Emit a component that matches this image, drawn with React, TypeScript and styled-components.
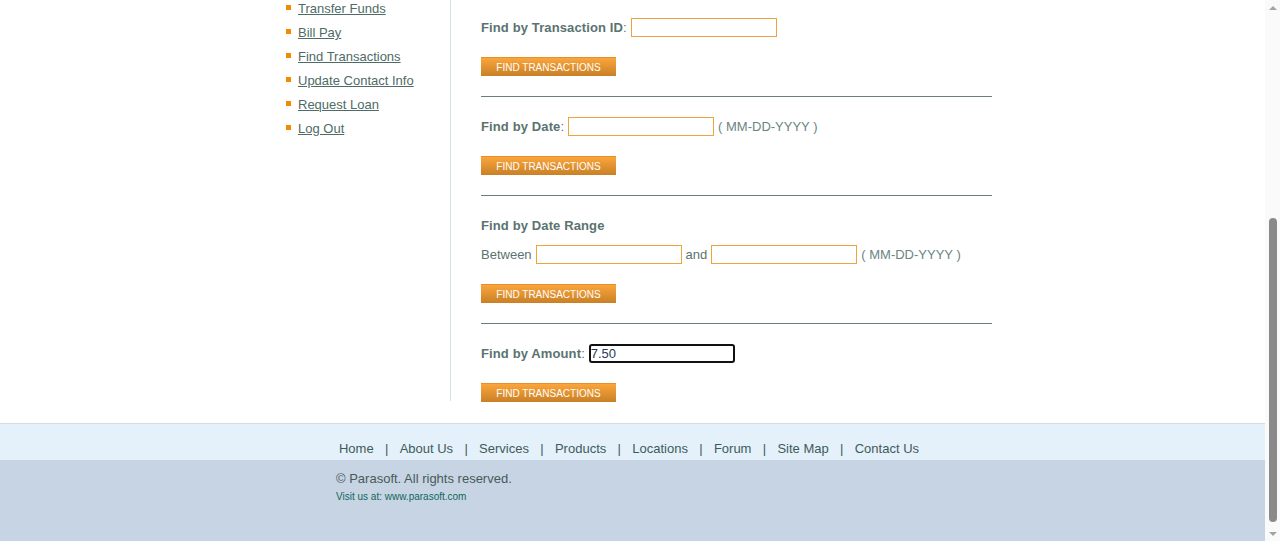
import React from 'react';
import styled, { createGlobalStyle } from 'styled-components';

const GlobalStyle = createGlobalStyle`
  body {
    margin: 0;
    background: #fff;
    font-family: 'Liberation Sans', Arial, sans-serif;
    font-size: 13px;
    color: #5a7370;
  }
`;

const Window = styled.div`
  display: flex;
  height: 541px;
  overflow: hidden;
`;

const Page = styled.div`
  flex: 1;
  min-width: 0;
  display: flex;
  flex-direction: column;
`;

const Container = styled.div`
  width: 719px;
  margin: 0 auto;
  display: flex;
`;

const LeftPanel = styled.div`
  width: 177px;
  flex: none;
  margin-bottom: 1px;
  border-right: 1px solid #cde8e3;
`;

const ServiceList = styled.ul`
  margin: 0;
  padding: 0;
  list-style: none;
`;

const ServiceItem = styled.li`
  display: flex;
  align-items: flex-start;
  height: 24px;
  padding-left: 13px;

  &::before {
    content: '';
    width: 5px;
    height: 5px;
    margin: 5px 7px 0 0;
    background: #f08c00;
    flex: none;
  }
`;

const ServiceLink = styled.a`
  color: #4f6b67;
  text-decoration: underline;
  line-height: 16px;
  padding-top: 1px;
`;

const RightPanel = styled.div`
  flex: 1;
  padding-left: 30px;
`;

const Section = styled.div<{ $first?: boolean; $last?: boolean }>`
  padding: ${(p) => (p.$first ? 18 : 20)}px 0 ${(p) => (p.$last ? 0 : 20)}px;
  border-bottom: ${(p) => (p.$last ? 'none' : '1px solid #687f7c')};
`;

const Heading = styled.div`
  font-weight: 700;
  letter-spacing: 0.12px;
  line-height: 19px;
  margin-bottom: 10px;
`;

const FormRow = styled.div`
  display: flex;
  align-items: center;
  gap: 4px;
  height: 19px;
  line-height: 19px;
  white-space: nowrap;
`;

const Label = styled.span`
  b {
    font-weight: 700;
    letter-spacing: 0.12px;
  }
`;

const Hint = styled.span`
  color: #6b8582;
`;

const TextInput = styled.input<{ $focused?: boolean }>`
  box-sizing: border-box;
  width: 146px;
  height: 19px;
  margin: 0;
  padding: 0 ${(p) => (p.$focused ? 0 : 1)}px;
  font-family: 'Liberation Sans', Arial, sans-serif;
  font-size: 13px;
  color: #243b55;
  background: #fff;
  outline: none;
  border: ${(p) => (p.$focused ? '2px solid #111' : '1px solid #f0a23e')};
  border-radius: ${(p) => (p.$focused ? 3 : 0)}px;
`;

const FindButton = styled.button`
  display: block;
  box-sizing: border-box;
  width: 135px;
  height: 19px;
  margin-top: 20px;
  padding: 0;
  border: none;
  border-top: 1px solid #e68f2c;
  background: linear-gradient(#fba53b, #c98027);
  color: #fff;
  font-family: 'Liberation Sans', Arial, sans-serif;
  font-size: 10px;
  line-height: 17px;
  text-transform: uppercase;
  cursor: pointer;
`;

const Footer = styled.div`
  margin-top: 21px;
  border-top: 1px solid #d3dce3;
  flex: 1;
  display: flex;
  flex-direction: column;
`;

const FooterLinks = styled.ul`
  margin: 0;
  padding: 17px 7px 3px 0;
  list-style: none;
  background: #e4f1fa;
  display: flex;
  justify-content: center;
  line-height: 16px;

  a {
    color: #3e5b5a;
    text-decoration: none;
  }
`;

const Sep = styled.span`
  color: #3e5b5a;
  padding: 0 11.3px;
`;

const FooterBottom = styled.div`
  flex: 1;
  background: #c6d4e3;
  padding-top: 11px;
`;

const FooterInner = styled.div`
  width: 593px;
  margin: 0 auto;
`;

const Copyright = styled.p`
  margin: 0;
  line-height: 16px;
  color: #485a5a;
`;

const Visit = styled.p`
  margin: 4px 0 0;
  font-size: 10px;
  line-height: 12px;
  color: #11675c;

  a {
    color: #11675c;
    text-decoration: none;
  }
`;

const ScrollTrack = styled.div`
  width: 15px;
  flex: none;
  background: #fafafa;
  display: flex;
  flex-direction: column;
  align-items: center;
`;

const Arrow = styled.div<{ $down?: boolean }>`
  height: 15px;
  width: 15px;
  display: flex;
  align-items: center;
  justify-content: center;

  &::before {
    content: '';
    border-left: 4.5px solid transparent;
    border-right: 4.5px solid transparent;
    ${(p) => (p.$down ? 'border-top' : 'border-bottom')}: 4.5px solid #a3a3a3;
  }
`;

const ThumbArea = styled.div`
  flex: 1;
  display: flex;
  flex-direction: column;
  justify-content: flex-end;
  padding-bottom: 4px;
`;

const Thumb = styled.div`
  width: 8px;
  border-radius: 4px;
  background: #8a8a8a;
`;

const services = [
  'Transfer Funds',
  'Bill Pay',
  'Find Transactions',
  'Update Contact Info',
  'Request Loan',
  'Log Out',
];

const footerLinks = [
  'Home',
  'About Us',
  'Services',
  'Products',
  'Locations',
  'Forum',
  'Site Map',
  'Contact Us',
];

// share of the page that fits in the window, sets the thumb length
const visibleShare = 0.6;

export default function App() {
  return (
    <>
      <GlobalStyle />
      <Window>
        <Page>
          <Container>
            <LeftPanel>
              <ServiceList>
                {services.map((s) => (
                  <ServiceItem key={s}>
                    <ServiceLink href="#">{s}</ServiceLink>
                  </ServiceItem>
                ))}
              </ServiceList>
            </LeftPanel>

            <RightPanel>
              <Section $first>
                <FormRow>
                  <Label><b>Find by Transaction ID</b>:</Label>
                  <TextInput />
                </FormRow>
                <FindButton>Find Transactions</FindButton>
              </Section>

              <Section>
                <FormRow>
                  <Label><b>Find by Date</b>:</Label>
                  <TextInput />
                  <Hint>( MM-DD-YYYY )</Hint>
                </FormRow>
                <FindButton>Find Transactions</FindButton>
              </Section>

              <Section>
                <Heading>Find by Date Range</Heading>
                <FormRow>
                  <Label>Between</Label>
                  <TextInput />
                  <Label>and</Label>
                  <TextInput />
                  <Hint>( MM-DD-YYYY )</Hint>
                </FormRow>
                <FindButton>Find Transactions</FindButton>
              </Section>

              <Section $last>
                <FormRow>
                  <Label><b>Find by Amount</b>:</Label>
                  <TextInput $focused defaultValue="7.50" />
                </FormRow>
                <FindButton>Find Transactions</FindButton>
              </Section>
            </RightPanel>
          </Container>

          <Footer>
            <FooterLinks>
              {footerLinks.map((l, i) => (
                <li key={l}>
                  <a href="#">{l}</a>
                  {i < footerLinks.length - 1 && <Sep>|</Sep>}
                </li>
              ))}
            </FooterLinks>
            <FooterBottom>
              <FooterInner>
                <Copyright>© Parasoft. All rights reserved.</Copyright>
                <Visit>
                  Visit us at: <a href="#">www.parasoft.com</a>
                </Visit>
              </FooterInner>
            </FooterBottom>
          </Footer>
        </Page>

        <ScrollTrack>
          <Arrow />
          <ThumbArea>
            <Thumb style={{ height: `${Math.round(507 * visibleShare)}px` }} />
          </ThumbArea>
          <Arrow $down />
        </ScrollTrack>
      </Window>
    </>
  );
}
